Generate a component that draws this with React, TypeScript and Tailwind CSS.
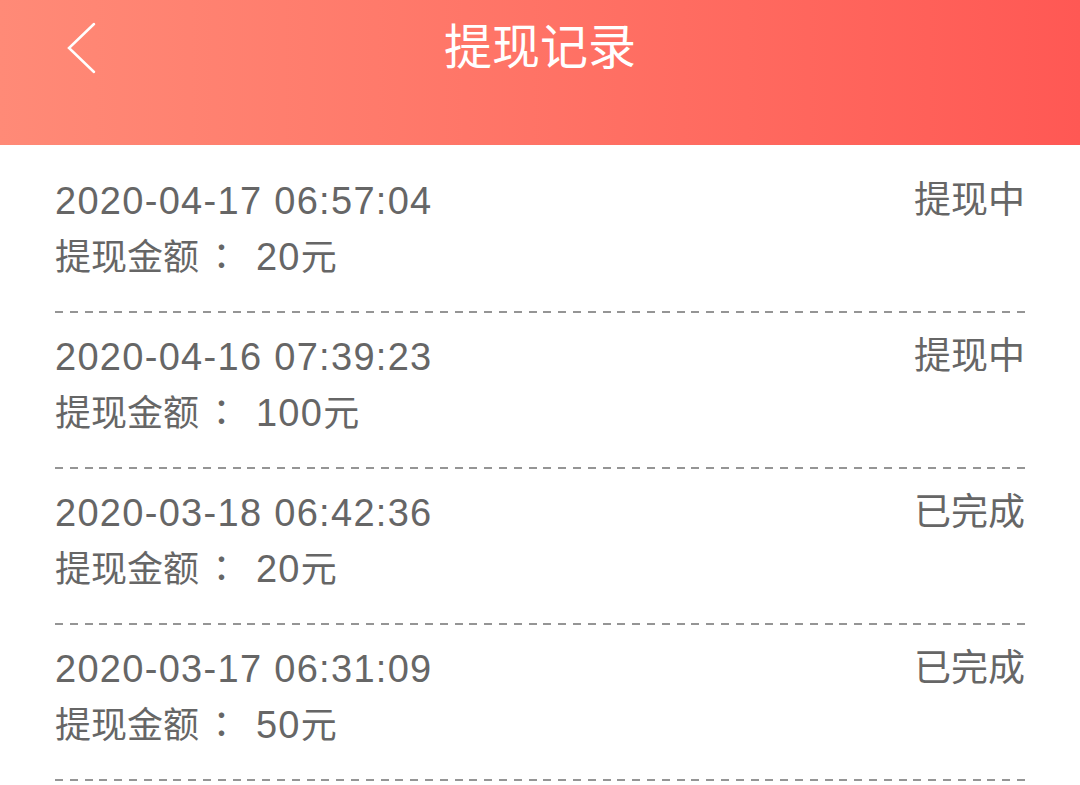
import React from 'react';

const records = [
  { time: '2020-04-17 06:57:04', amount: '20', status: '提现中' },
  { time: '2020-04-16 07:39:23', amount: '100', status: '提现中' },
  { time: '2020-03-18 06:42:36', amount: '20', status: '已完成' },
  { time: '2020-03-17 06:31:09', amount: '50', status: '已完成' },
];

export default function App() {
  return (
    <div className="w-[1080px] h-[785px] bg-white overflow-hidden font-['Liberation_Sans','Noto_Sans_CJK_SC',sans-serif]">
      {/* Header */}
      <header className="relative h-[145px] bg-gradient-to-r from-[#ff8a77] to-[#ff5854] flex justify-center">
        <button className="absolute left-[60px] top-[16px] w-[44px] h-[64px] flex items-center justify-center">
          <svg width="44" height="64" viewBox="0 0 44 64" fill="none">
            <path d="M34 8 L9 32 L34 56" stroke="#fff" strokeWidth="2.5" strokeLinecap="round" strokeLinejoin="miter" />
          </svg>
        </button>
        <h1 className="mt-[20px] h-[56px] leading-[56px] text-[48px] text-white font-normal">提现记录</h1>
      </header>

      {/* List */}
      <div className="px-[55px] pt-[12px]">
        {records.map((r) => (
          <div key={r.time}>
            <div className="pt-[18px] pb-[30px] text-[#666666]">
              <div className="flex justify-between h-[52px]">
                <span className="text-[38px] leading-[52px] tracking-[1.3px]">{r.time}</span>
                <span className="text-[37px] leading-[52px]">{r.status}</span>
              </div>
              <div className="h-[54px] leading-[54px] text-[38px] tracking-[1.3px] whitespace-nowrap">
                <span className="text-[36px] tracking-normal">提现金额</span>
                <span className="inline-block w-[45px] text-center text-[36px] tracking-normal font-['Noto_Sans_CJK_TC',sans-serif]">：</span>
                {' '}
                {r.amount}
                <span className="text-[36px] tracking-normal">元</span>
              </div>
            </div>
            <div className="h-[2px] bg-[repeating-linear-gradient(to_right,#959595_0_8px,transparent_8px_14.8px)]" />
          </div>
        ))}
      </div>
    </div>
  );
}
